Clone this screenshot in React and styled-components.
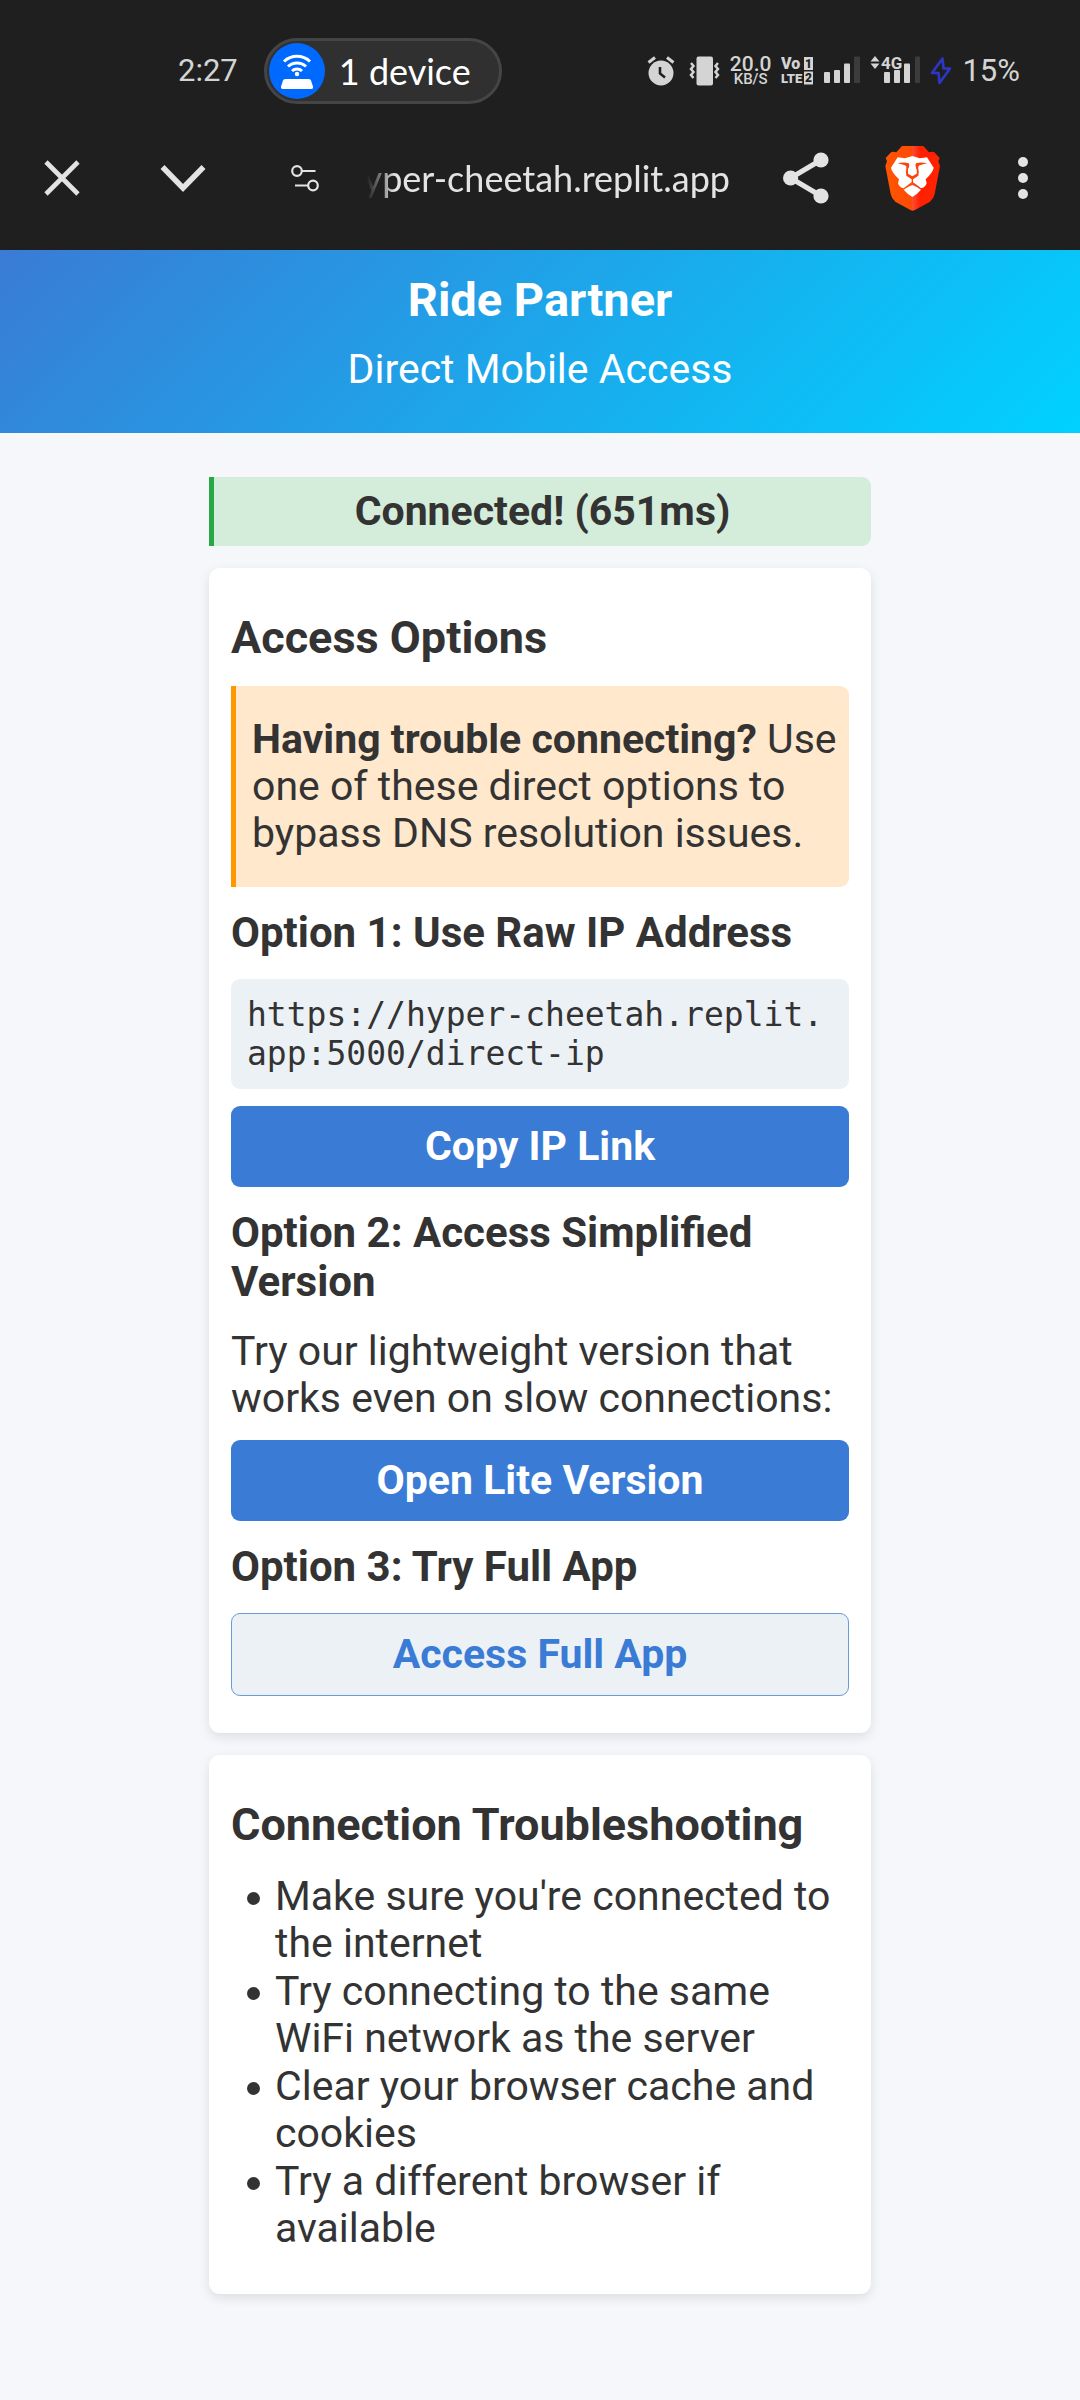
import React from "react";
import styled, { createGlobalStyle } from "styled-components";

const GlobalStyle = createGlobalStyle`
  *, *::before, *::after { box-sizing: border-box; }
  body {
    margin: 0;
    background: #f5f7fb;
    color: #333;
    font-family: Roboto, sans-serif;
    font-size: 41px;
    line-height: 47px;
  }
  h1, h2, h3, p, ul { margin: 0; padding: 0; }
  button { font: inherit; border: 0; padding: 0; background: none; cursor: pointer; }
  svg { display: block; flex: none; }
`;

/* ---------- device chrome ---------- */

const Chrome = styled.div`
  background: #1f1f1f;
  color: #d4d4d4;
`;

const StatusBar = styled.div`
  display: flex;
  align-items: center;
  justify-content: space-between;
  height: 106px;
  padding: 36px 60px 0 178px;
`;

const Group = styled.div`
  display: flex;
  align-items: center;
  gap: ${(p) => p.$gap}px;
`;

const StatusText = styled.span`
  font-size: 31px;
  line-height: 36px;
`;

const DevicePill = styled.div`
  display: flex;
  align-items: center;
  gap: 14px;
  height: 66px;
  padding: 0 28px 0 2px;
  border: 3px solid #454545;
  border-radius: 33px;
  background: #303030;
  color: #fff;
  font-family: Lato, sans-serif;
  font-size: 36px;
  line-height: 44px;
`;

const HotspotBadge = styled.span`
  display: grid;
  place-items: center;
  width: 56px;
  height: 56px;
  border-radius: 50%;
  background: #0069ff;
`;

const Speed = styled.div`
  display: flex;
  flex-direction: column;
  align-items: center;
  font-family: Roboto, sans-serif;
  font-weight: 500;
  font-size: 21px;
  line-height: 16px;

  small {
    font-size: 15px;
    line-height: 14px;
  }
`;

const Toolbar = styled.div`
  display: flex;
  align-items: center;
  height: 144px;
`;

const ToolButton = styled.button`
  display: grid;
  place-items: center;
  flex: none;
  width: ${(p) => p.$width}px;
  height: 144px;
  color: #e3e3e3;
`;

const Address = styled.div`
  flex: 1;
  display: flex;
  justify-content: flex-end;
  min-width: 0;
  margin-right: 22px;
  overflow: hidden;
  white-space: nowrap;
  color: #e3e3e3;
  font-family: Lato, sans-serif;
  font-size: 36px;
  line-height: 48px;
  mask-image: linear-gradient(to right, transparent, #000 28px);
`;

/* ---------- page ---------- */

const Header = styled.header`
  display: flex;
  flex-direction: column;
  gap: 19px;
  padding: 22px 22px 40px;
  background: linear-gradient(135deg, #3a7bd5, #00d2ff);
  color: #fff;
  text-align: center;
`;

const Title = styled.h1`
  font-size: 47px;
  line-height: 55px;
  font-weight: 700;
`;

const Main = styled.main`
  display: flex;
  flex-direction: column;
  gap: 22px;
  max-width: 662px;
  margin: 0 auto;
  padding: 44px 0;
`;

const Status = styled.div`
  padding: 11px 16px;
  border-left: 5px solid #28a745;
  border-radius: 0 9px 9px 0;
  background: #d4edda;
  font-weight: 700;
  text-align: center;
`;

const Card = styled.section`
  padding: 44px 22px 37px;
  border-radius: 11px;
  background: #fff;
  box-shadow: 0 4px 12px rgba(0, 0, 0, 0.1);
`;

const CardTitle = styled.h2`
  margin-bottom: 22px;
  font-size: 45px;
  line-height: 52px;
  font-weight: 700;
`;

const OptionTitle = styled.h3`
  margin: 21px 0 22px;
  font-size: 42px;
  line-height: 49px;
  font-weight: 700;
`;

const Notice = styled.div`
  padding: 30px 8px 30px 16px;
  border-left: 5px solid #ff9800;
  border-radius: 0 9px 9px 0;
  background: #ffe8cc;
`;

const Code = styled.code`
  display: block;
  margin-bottom: 17px;
  padding: 16px;
  border-radius: 9px;
  background: #ecf1f6;
  font-family: "DejaVu Sans Mono", monospace;
  font-size: 33px;
  line-height: 39px;
  word-break: break-all;
`;

const Text = styled.p`
  margin-bottom: 18px;
`;

const Action = styled.button`
  display: block;
  width: 100%;
  padding: 17px;
  border: ${(p) => (p.$outline ? "1px solid #6b9adb" : "0")};
  border-radius: 9px;
  background: ${(p) => (p.$outline ? "#ecf1f6" : "#3a7bd5")};
  color: ${(p) => (p.$outline ? "#3a7bd5" : "#fff")};
  font-weight: 700;
  text-align: center;
  text-decoration: none;
`;

const Tips = styled.ul`
  display: flex;
  flex-direction: column;
  gap: 1px;
  padding: 0 0 5px 16px;
  list-style: none;
`;

const Tip = styled.li`
  display: flex;
  gap: 15px;

  &::before {
    content: "";
    flex: none;
    width: 13px;
    height: 13px;
    margin-top: 19px;
    border-radius: 50%;
    background: currentColor;
  }
`;

/* ---------- icons ---------- */

const HotspotIcon = () => (
  <svg width="34" height="36" viewBox="0 0 34 36" fill="none" stroke="#fff" strokeWidth="3">
    <path d="M4 8.5a19 19 0 0 1 26 0" />
    <path d="M8 13.5a13 13 0 0 1 18 0" />
    <path d="M12 18a7.500 7.500 0 0 1 10 0" />
    <circle cx="17" cy="21" r="2.200" fill="#fff" stroke="none" />
    <path d="M5 26h24q1.500 0 2 1.500l2 6q.5 2.500-2 2.500H3q-2.500 0-2-2.500l2-6Q3.500 26 5 26Z" fill="#fff" stroke="none" />
  </svg>
);

const AlarmIcon = () => (
  <svg width="28" height="30" viewBox="0 0 28 30" fill="none">
    <circle cx="14" cy="17" r="12.500" fill="#d4d4d4" />
    <path d="M1.500 6.500 8 1.500M26.500 6.500 20 1.500" stroke="#d4d4d4" strokeWidth="3" />
    <path d="M13 11v6.500l5 4" stroke="#1f1f1f" strokeWidth="2.600" />
  </svg>
);

const VibrateIcon = () => (
  <svg width="31" height="30" viewBox="0 0 31 30" fill="none">
    <rect x="7.500" y="0.500" width="16.500" height="29" rx="2" fill="#d4d4d4" />
    <path d="M2 7l2.500 3L2 13l2.500 3L2 19l2.500 3M29 7l-2.500 3 2.500 3-2.500 3 2.500 3-2.500 3" stroke="#d4d4d4" strokeWidth="2.500" />
  </svg>
);

const VolteIcon = () => (
  <svg width="33" height="30" viewBox="0 0 33 30" fill="#d4d4d4" fontFamily="Roboto, sans-serif" fontWeight="900">
    <text x="0" y="13" fontSize="16">Vo</text>
    <text x="0" y="27" fontSize="13">LTE</text>
    <rect x="23" y="1" width="9" height="13" />
    <rect x="23" y="15.500" width="9" height="13" />
    <text x="24" y="12" fontSize="12" fill="#1f1f1f">1</text>
    <text x="24" y="26" fontSize="12" fill="#1f1f1f">2</text>
  </svg>
);

const SignalIcon = () => (
  <svg width="36" height="30" viewBox="0 0 36 30" fill="#d4d4d4">
    <rect x="0" y="16" width="6" height="11" rx="1" />
    <rect x="10" y="14" width="6" height="13" rx="1" />
    <rect x="20" y="7.500" width="6" height="19.500" rx="1" />
    <rect x="30" y="0.500" width="6" height="26.500" rx="1" fill="#3c3c3c" />
  </svg>
);

const DataSignalIcon = () => (
  <svg width="50" height="30" viewBox="0 0 50 30" fill="#d4d4d4">
    <path d="M5 0l4.500 5.500h-9ZM5 13l4.500-5.500h-9Z" />
    <rect x="14" y="16" width="6" height="11" rx="1" />
    <rect x="24" y="14" width="6" height="13" rx="1" />
    <rect x="34" y="7.500" width="6" height="19.500" rx="1" />
    <rect x="45" y="0.500" width="5" height="26.500" rx="1" fill="#3c3c3c" />
    <text x="11" y="13" fontSize="17" fontWeight="700" fontFamily="Roboto, sans-serif" stroke="#1f1f1f" strokeWidth="2" paintOrder="stroke">4G</text>
  </svg>
);

const BoltIcon = () => (
  <svg width="22" height="30" viewBox="0 0 22 30" fill="none" stroke="#2c37c4" strokeWidth="2.600" strokeLinejoin="round">
    <path d="M12.500 2.500 2 17h6.500L9.500 27 20 12.500h-6.500Z" />
  </svg>
);

const CloseIcon = () => (
  <svg width="36" height="36" viewBox="0 0 36 36" stroke="currentColor" strokeWidth="4.600">
    <path d="M2 2l32 32M34 2 2 34" />
  </svg>
);

const ChevronIcon = () => (
  <svg width="46" height="28" viewBox="0 0 46 28" fill="none" stroke="currentColor" strokeWidth="5.500">
    <path d="M2.500 3 23 24 43.500 3" />
  </svg>
);

const TuneIcon = () => (
  <svg width="28" height="27" viewBox="0 0 28 27" fill="none" stroke="currentColor" strokeWidth="2.200">
    <circle cx="6" cy="6" r="4.800" />
    <circle cx="22" cy="20.500" r="4.800" />
    <path d="M11 6h13.500M4 20.500h13" />
  </svg>
);

const ShareIcon = () => (
  <svg width="46" height="52" viewBox="0 0 46 52" fill="currentColor">
    <path d="M38 8 7.500 26 38 44" fill="none" stroke="currentColor" strokeWidth="5" />
    <circle cx="38" cy="8" r="7.600" />
    <circle cx="7.600" cy="26" r="7.600" />
    <circle cx="38" cy="44" r="7.600" />
  </svg>
);

const BraveIcon = () => (
  <svg width="72" height="76" viewBox="0 0 216 228">
    <defs>
      <linearGradient id="brave" x1="25" x2="189" y1="0" y2="0" gradientUnits="userSpaceOnUse">
        <stop offset="0" stopColor="#ff5601" />
        <stop offset="0.480" stopColor="#ff4a06" />
        <stop offset="0.500" stopColor="#ff4a2e" />
        <stop offset="0.640" stopColor="#ff2000" />
        <stop offset="1" stopColor="#ff2300" />
      </linearGradient>
    </defs>
    <path
      d="M75 18h64l17 19q12-5 18 2l14 15-4 10 5 14-16 84q-3 14-14 23l-41 23q-11 8-22 0l-41-23q-11-9-14-23L25 78l5-14-4-10 14-15q6-7 18-2Z"
      fill="url(#brave)"
    />
    <path
      d="M62 52l22 3 22-7 22 7 22-3 20 31q-1 12-24 35l3 12q-5 13-17 15-14-12-26-20-12 8-26 20-12-2-17-15l3-12Q43 95 42 83Z"
      fill="#fff"
    />
    <path d="M106 135q16 6 26 14-12 14-26 22-14-8-26-22 10-8 26-14Z" fill="#fff" />
    <g fill="#ff4208">
      <path d="M62 70q18-5 33 0 4 4 1 11-5 9-3 20l13 8 13-8q2-11-3-20-3-7 1-11 15-5 33 0l-22 6q-6 3-4 10 3 11 0 21l-16 11v10h-4v-10L88 107q-3-10 0-21 2-7-4-10Z" />
    </g>
    <path d="M97 81q1-4 0-9h18q-1 5 0 9 6 10 3 19l-12 7-12-7q-3-9 3-19Z" fill="#fff" />
  </svg>
);

const MoreIcon = () => (
  <svg width="10" height="42" viewBox="0 0 10 42" fill="currentColor">
    <circle cx="5" cy="5" r="5" />
    <circle cx="5" cy="21" r="5" />
    <circle cx="5" cy="37" r="5" />
  </svg>
);

const tips = [
  "Make sure you're connected to the internet",
  "Try connecting to the same WiFi network as the server",
  "Clear your browser cache and cookies",
  "Try a different browser if available",
];

export default function App() {
  return (
    <>
      <GlobalStyle />
      <Chrome>
        <StatusBar>
          <Group $gap={26}>
            <StatusText>2:27</StatusText>
            <DevicePill>
              <HotspotBadge>
                <HotspotIcon />
              </HotspotBadge>
              1 device
            </DevicePill>
          </Group>
          <Group $gap={10}>
            <Group $gap={14}>
              <AlarmIcon />
              <VibrateIcon />
            </Group>
            <Speed>
              20.0
              <small>KB/S</small>
            </Speed>
            <VolteIcon />
            <SignalIcon />
            <DataSignalIcon />
            <BoltIcon />
            <StatusText>15%</StatusText>
          </Group>
        </StatusBar>
        <Toolbar>
          <ToolButton $width={123} aria-label="Close">
            <CloseIcon />
          </ToolButton>
          <ToolButton $width={120} aria-label="Minimize">
            <ChevronIcon />
          </ToolButton>
          <ToolButton $width={124} aria-label="Site settings">
            <TuneIcon />
          </ToolButton>
          <Address>hyper-cheetah.replit.app</Address>
          <ToolButton $width={108} aria-label="Share">
            <ShareIcon />
          </ToolButton>
          <ToolButton $width={105} aria-label="Brave Shields">
            <BraveIcon />
          </ToolButton>
          <ToolButton $width={115} aria-label="More options">
            <MoreIcon />
          </ToolButton>
        </Toolbar>
      </Chrome>

      <Header>
        <Title>Ride Partner</Title>
        <p>Direct Mobile Access</p>
      </Header>

      <Main>
        <Status role="status">Connected! (651ms)</Status>

        <Card>
          <CardTitle>Access Options</CardTitle>
          <Notice>
            <p>
              <strong>Having trouble connecting?</strong> Use one of these direct options to bypass DNS
              resolution issues.
            </p>
          </Notice>

          <OptionTitle>Option 1: Use Raw IP Address</OptionTitle>
          <Code>https://hyper-cheetah.replit.app:5000/direct-ip</Code>
          <Action type="button">Copy IP Link</Action>

          <OptionTitle>Option 2: Access Simplified Version</OptionTitle>
          <Text>Try our lightweight version that works even on slow connections:</Text>
          <Action as="a" href="#lite">
            Open Lite Version
          </Action>

          <OptionTitle>Option 3: Try Full App</OptionTitle>
          <Action as="a" href="#app" $outline>
            Access Full App
          </Action>
        </Card>

        <Card>
          <CardTitle>Connection Troubleshooting</CardTitle>
          <Tips>
            {tips.map((tip) => (
              <Tip key={tip}>{tip}</Tip>
            ))}
          </Tips>
        </Card>
      </Main>
    </>
  );
}
